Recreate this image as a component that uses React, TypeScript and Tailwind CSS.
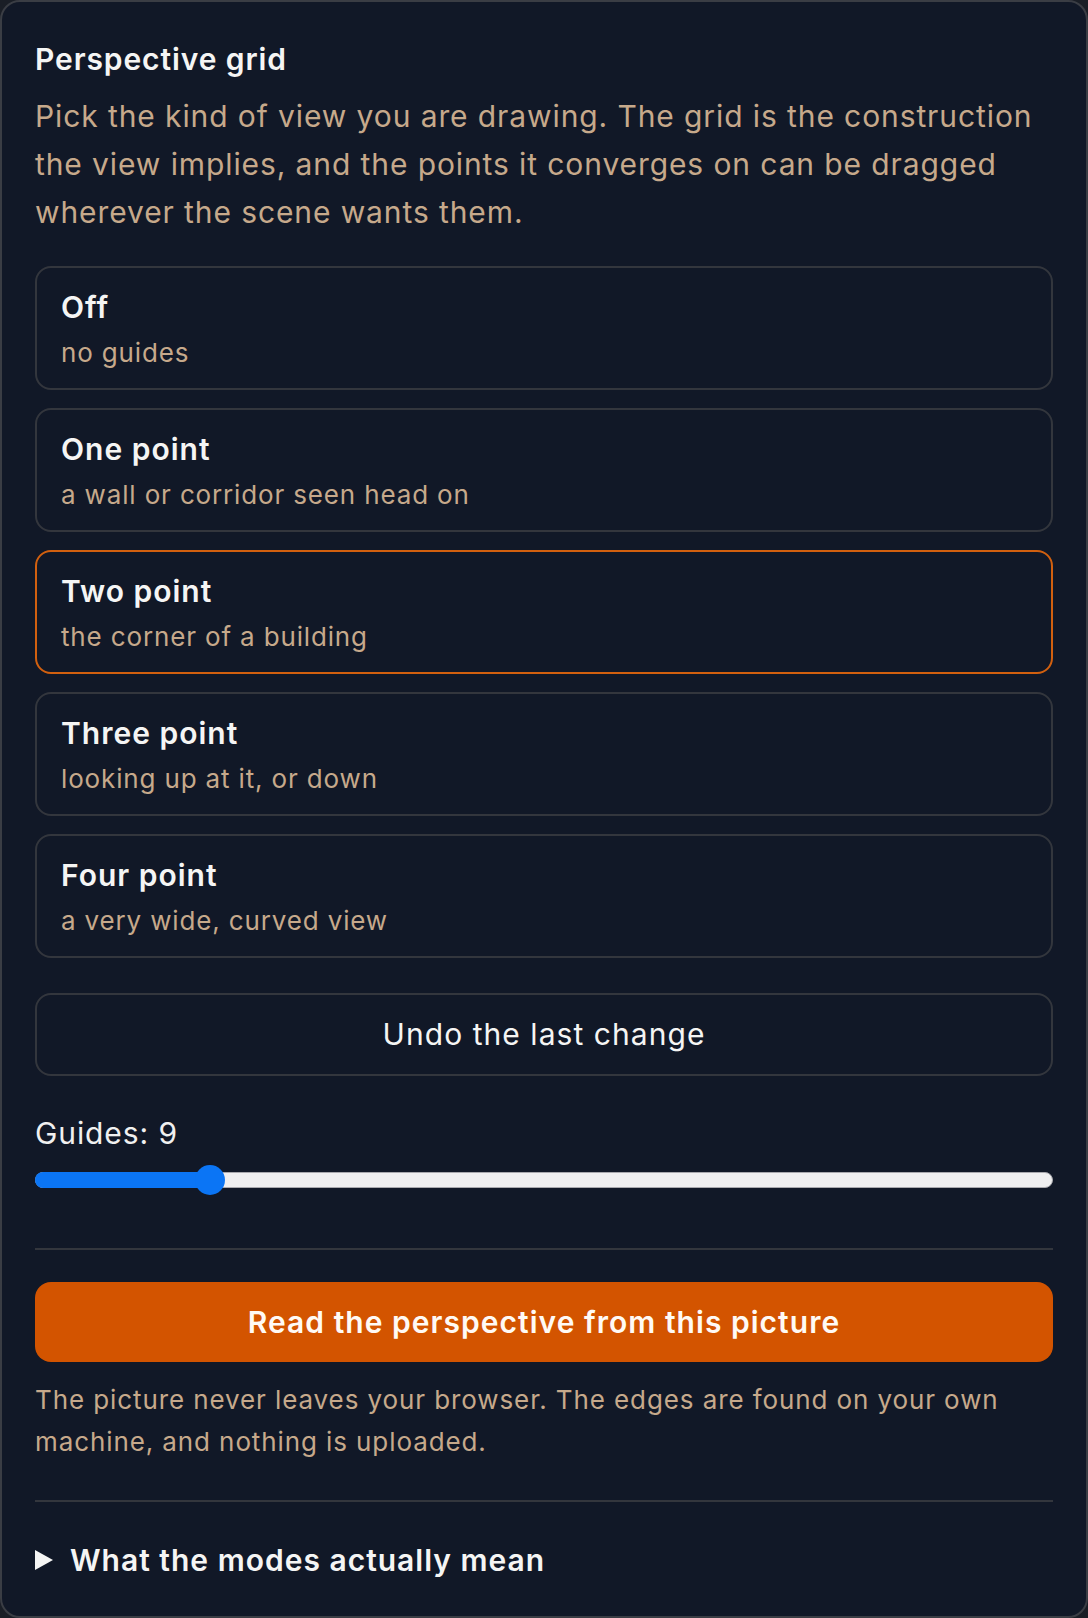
import { useState } from "react";

type Mode = {
  id: string;
  name: string;
  hint: string;
};

const modes: Mode[] = [
  { id: "off", name: "Off", hint: "no guides" },
  { id: "one", name: "One point", hint: "a wall or corridor seen head on" },
  { id: "two", name: "Two point", hint: "the corner of a building" },
  { id: "three", name: "Three point", hint: "looking up at it, or down" },
  { id: "four", name: "Four point", hint: "a very wide, curved view" },
];

const MIN_GUIDES = 3;
const MAX_GUIDES = 40;

function GuideSlider({ value }: { value: number }) {
  const pct = (value - MIN_GUIDES) / (MAX_GUIDES - MIN_GUIDES);
  return (
    <div className="relative mt-[12px] h-[30px] w-full">
      {/* track */}
      <div className="absolute left-0 right-0 top-[7px] h-[16px] rounded-full border border-[#a9a9ae] bg-[#efeff0]" />
      <div
        className="absolute left-0 top-[7px] h-[16px] rounded-full bg-[#0b75f5]"
        style={{ width: `calc(15px + (100% - 30px) * ${pct})` }}
      />
      {/* thumb */}
      <div
        className="absolute top-0 h-[30px] w-[30px] rounded-full bg-[#0b75f5]"
        style={{ left: `calc((100% - 30px) * ${pct})` }}
      />
    </div>
  );
}

export default function App() {
  const [mode, setMode] = useState("two");
  const [guides] = useState(9);

  return (
    <div className="min-h-screen bg-[#1a1e26] font-[Inter,'Noto_Sans',sans-serif] tracking-[0.9px] antialiased">
      <section className="flex h-[1618px] flex-col rounded-[20px] border-2 border-[#3a3d44] bg-[#111827] px-[33px] pt-[36px]">
        <h2 className="text-[30px] font-semibold leading-[42px] text-[#f5f5f4]">
          Perspective grid
        </h2>
        <p className="mt-[12px] text-[30px] leading-[48px] text-[#c6a98b]">
          Pick the kind of view you are drawing. The grid is the construction
          the view implies, and the points it converges on can be dragged
          wherever the scene wants them.
        </p>

        <div className="mt-[30px] flex flex-col gap-[18px]">
          {modes.map((m) => (
            <button
              key={m.id}
              onClick={() => setMode(m.id)}
              className={`flex h-[124px] flex-col rounded-[16px] border-2 px-[24px] pt-[17px] text-left ${
                mode === m.id ? "border-[#d2600f]" : "border-[#33363d]"
              }`}
            >
              <span className="text-[30px] font-semibold leading-[44px] tracking-[1px] text-[#f5f5f4]">
                {m.name}
              </span>
              <span className="mt-[4px] text-[26px] leading-[40px] tracking-[0.85px] text-[#c6a98b]">
                {m.hint}
              </span>
            </button>
          ))}
        </div>

        <button className="mt-[35px] h-[83px] rounded-[16px] border-2 border-[#33363d] text-[30px] tracking-[1.05px] text-[#f5f5f4]">
          Undo the last change
        </button>

        <div className="mt-[37px] text-[30px] leading-[40px] text-[#f0f0f0]">
          Guides: {guides}
        </div>
        <GuideSlider value={guides} />

        <div className="mt-[53px] h-[2px] bg-[#33363d]" />

        <button className="mt-[32px] h-[80px] rounded-[16px] bg-[#d35400] text-[30px] font-semibold tracking-[1.03px] text-[#fffaf5]">
          Read the perspective from this picture
        </button>
        <p className="mt-[17px] text-[26px] leading-[42px] text-[#c6a98b]">
          The picture never leaves your browser. The edges are found on your own
          machine, and nothing is uploaded.
        </p>

        <div className="mt-[37px] h-[2px] bg-[#33363d]" />

        <details className="mt-[36px]">
          <summary className="flex cursor-pointer list-none items-center gap-[17px] text-[30px] font-semibold leading-[44px] tracking-[1px] text-[#f5f5f4] [&::-webkit-details-marker]:hidden">
            <svg width="18" height="20" viewBox="0 0 18 20" className="shrink-0">
              <polygon points="0,0 18,10 0,20" fill="#f5f5f4" />
            </svg>
            What the modes actually mean
          </summary>
        </details>
      </section>
    </div>
  );
}
